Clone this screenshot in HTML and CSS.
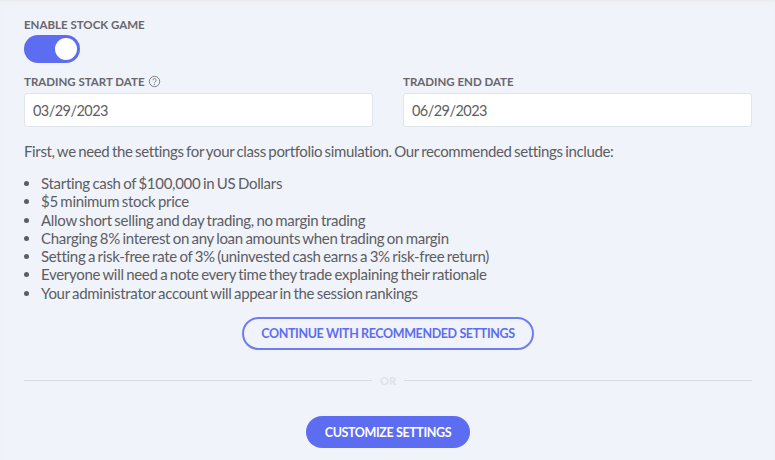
FILE: index.html
```html
<!DOCTYPE html>
<html lang="en">
<head>
<meta charset="utf-8">
<title>Stock game settings</title>
<link rel="stylesheet" href="styles.css">
</head>
<body>
<main class="page">
  <div class="label">ENABLE STOCK GAME</div>
  <div class="toggle"><span class="knob"></span></div>
  <div class="dates">
    <div class="field">
      <div class="label">TRADING START DATE
        <svg class="help" viewBox="0 0 14 14" width="13" height="13"><circle cx="7" cy="7" r="5.6" fill="none" stroke="#77777d" stroke-width="1"/><path d="M5.2 5.6a1.8 1.8 0 1 1 2.8 1.5c-.6.4-1 .7-1 1.4" fill="none" stroke="#77777d" stroke-width="1"/><circle cx="7" cy="10.2" r=".65" fill="#77777d"/></svg>
      </div>
      <input class="input" type="text" value="03/29/2023">
    </div>
    <div class="field">
      <div class="label">TRADING END DATE</div>
      <input class="input" type="text" value="06/29/2023">
    </div>
  </div>
  <p class="intro">First, we need the settings for your class portfolio simulation. Our recommended settings include:</p>
  <ul class="list">
    <li>Starting cash of $100,000 in US Dollars</li>
    <li>$5 minimum stock price</li>
    <li>Allow short selling and day trading, no margin trading</li>
    <li>Charging 8% interest on any loan amounts when trading on margin</li>
    <li>Setting a risk-free rate of 3% (uninvested cash earns a 3% risk-free return)</li>
    <li>Everyone will need a note every time they trade explaining their rationale</li>
    <li>Your administrator account will appear in the session rankings</li>
  </ul>
  <div class="actions"><button class="btn btn-outline">CONTINUE WITH RECOMMENDED SETTINGS</button></div>
  <div class="divider"><span class="or">OR</span></div>
  <div class="actions"><button class="btn btn-solid">CUSTOMIZE SETTINGS</button></div>
</main>
</body>
</html>
```
FILE: styles.css
```css
* { box-sizing: border-box; }
html, body { margin: 0; height: 460px; overflow: hidden; }
body {
  background: #f0f3f9;
  font-family: Lato, sans-serif;
  color: #5c5d63;
  box-shadow: inset 0 4px 4px -3px #e6e8ec;
}
.page { padding: 17px 23px 0 24px; }
.label {
  font-size: 11.5px;
  line-height: 15px;
  font-weight: 700;
  color: #66666c;
  display: flex;
  align-items: center;
  gap: 3px;
}
.toggle {
  width: 56px;
  height: 28px;
  margin-top: 3px;
  border-radius: 14px;
  background: #5d6df1;
  display: flex;
  align-items: center;
  justify-content: flex-end;
  padding-right: 3px;
}
.knob { width: 22px; height: 22px; border-radius: 50%; background: #fff; }
.dates {
  display: grid;
  grid-template-columns: 349px 349px;
  column-gap: 30px;
  margin-top: 11px;
}
.field .label { height: 15px; }
.input {
  display: block;
  width: 100%;
  height: 34px;
  margin-top: 4px;
  border: 1px solid #dfe5ea;
  border-radius: 3px;
  background: #fff;
  padding: 0 8px;
  font: 14.5px Lato, sans-serif;
  letter-spacing: -0.55px;
  color: #5c5d63;
  outline: none;
}
.intro {
  margin: 14px 0 0;
  font-size: 15px;
  line-height: 20px;
  letter-spacing: -0.35px;
  word-spacing: -1px;
}
.list {
  margin: 13px 0 0;
  padding: 0 0 0 17px;
  font-size: 15px;
  line-height: 18.3px;
  letter-spacing: -0.3px;
  word-spacing: -1px;
}
.actions { display: flex; justify-content: center; }
.btn {
  font-family: Lato, sans-serif;
  font-weight: 700;
  font-size: 12.5px;
  letter-spacing: -0.38px;
  border-radius: 17px;
  height: 33px;
  padding: 0;
}
.btn-outline {
  width: 292px;
  margin-top: 15px;
  background: transparent;
  border: 2px solid #6f7df2;
  color: #5d6df1;
}
.btn-solid {
  width: 164px;
  margin-top: 28px;
  height: 32px;
  background: #5d6df1;
  border: 0;
  color: #fff;
}
.divider {
  display: flex;
  align-items: center;
  margin-top: 23px;
  height: 15px;
  gap: 8px;
}
.divider::before, .divider::after {
  content: "";
  flex: 1;
  height: 1px;
  background: #d6dee2;
}
.or { font-size: 11px; font-weight: 700; color: #dde3e7; }
```
